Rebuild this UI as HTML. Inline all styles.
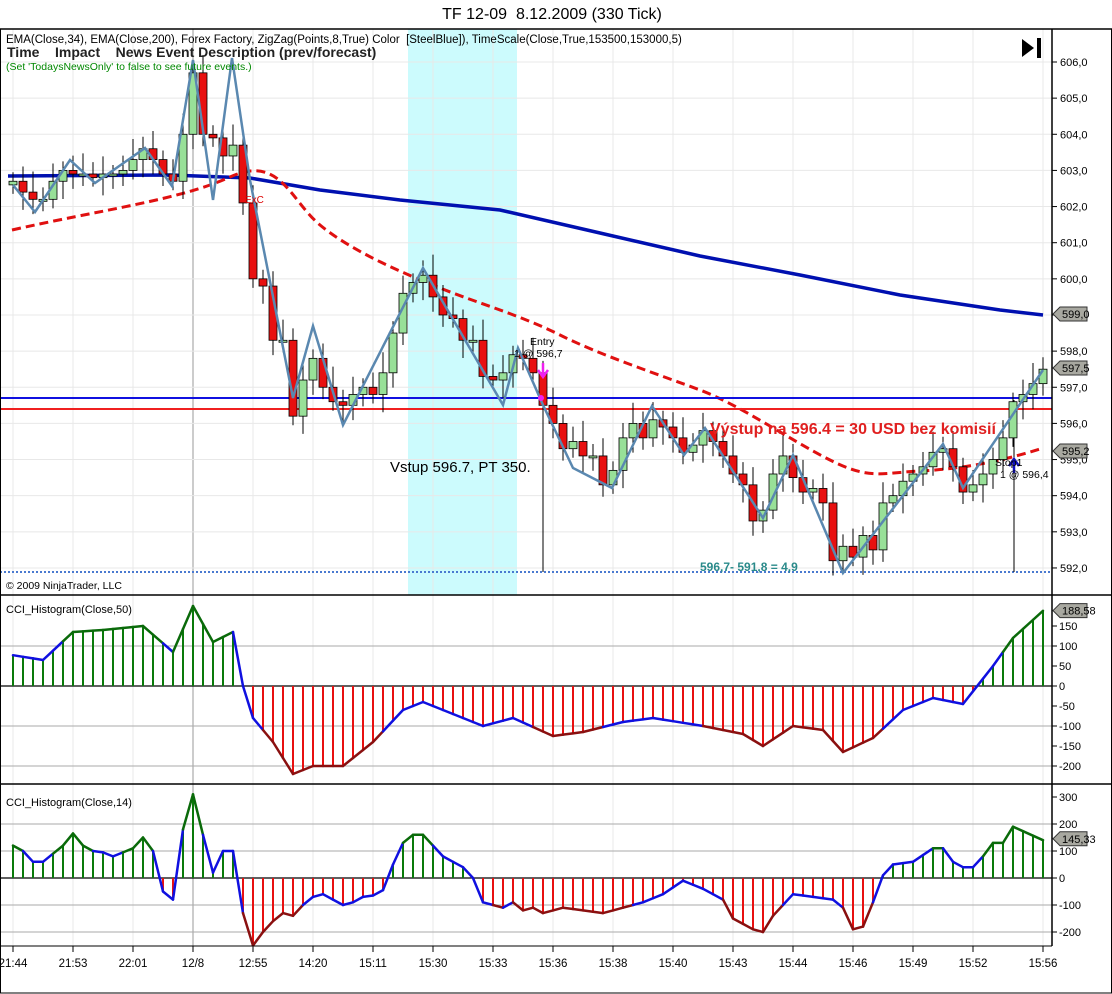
<!DOCTYPE html>
<html><head><meta charset="utf-8"><style>
body{margin:0;background:#fff;width:1112px;height:994px;overflow:hidden;font-family:"Liberation Sans",sans-serif}
svg{display:block}
text{white-space:pre}
</style></head><body>
<svg id="s" width="1112" height="994" xmlns="http://www.w3.org/2000/svg" font-family="Liberation Sans, sans-serif"></svg>
<script>
const S=document.getElementById('s');let h='';
const Y=p=>62+(606-p)*36.14;
const closes=[602.7,602.4,602.2,602.2,602.7,603.0,602.9,602.9,602.8,602.9,602.9,603.0,603.3,603.6,603.3,602.9,602.7,604.0,605.7,604.0,603.9,603.4,603.7,602.1,600.0,599.8,598.3,598.3,596.2,597.2,597.8,597.0,596.6,596.5,596.8,597.0,596.8,597.4,598.5,599.6,599.9,600.1,599.5,599.0,598.9,598.3,598.3,597.3,597.2,597.4,597.9,597.8,597.4,596.5,596.0,595.3,595.5,595.1,595.1,594.3,594.7,595.6,596.0,595.6,596.1,595.9,595.6,595.2,595.4,595.8,595.5,595.1,594.6,594.3,593.3,593.6,594.6,595.1,594.5,594.1,594.2,593.8,592.2,592.6,592.3,592.9,592.5,593.8,594.0,594.4,594.6,594.8,595.2,595.3,594.8,594.1,594.3,594.6,595.0,595.6,596.6,596.8,597.1,597.5];
const X=i=>13+i*10;
h+='<rect x="408" y="29" width="109" height="566" fill="#ccfbfd"/>';
const times=['21:44','21:53','22:01','12/8','12:55','14:20','15:11','15:30','15:33','15:36','15:38','15:40','15:43','15:44','15:46','15:49','15:52','15:56'];
for(let i=0;i<times.length;i++){const xx=i==17?1043:13+i*60;
 h+=`<line x1="${xx}" y1="29" x2="${xx}" y2="946" stroke="${times[i]=='12/8'?'#999':'#e8e8e8'}" stroke-width="1"/>`;
 h+=`<line x1="${xx}" y1="946" x2="${xx}" y2="952" stroke="#000"/>`;
 h+=`<text x="${xx}" y="967" font-size="11.5" text-anchor="middle">${times[i]}</text>`;}
for(let p=592;p<=606;p++){const y=Y(p);h+=`<line x1="0" y1="${y}" x2="1052" y2="${y}" stroke="#e8e8e8"/><line x1="1052" y1="${y}" x2="1057" y2="${y}" stroke="#000"/><text x="1060" y="${y+4}" font-size="11">${p},0</text>`;}
h+='<polyline fill="none" stroke="#0010b0" stroke-width="3.5" points="8,176 170,175 250,178 320,190 400,200 500,210 600,233 700,256 800,275 900,295 1000,310 1043,315"/>';
h+='<path fill="none" stroke="#e01010" stroke-width="3" stroke-dasharray="9,5" d="M12,230 C100,210 180,200 230,177 S290,200 320,225 S400,272 440,288 S520,315 560,335 S660,375 700,390 S790,440 830,460 S880,473 920,471 S1000,462 1043,448"/>';
h+='<line x1="0" y1="398" x2="1052" y2="398" stroke="#1010e0" stroke-width="2"/><line x1="0" y1="409" x2="1052" y2="409" stroke="#f02020" stroke-width="2"/>';
h+='<line x1="0" y1="572" x2="1052" y2="572" stroke="#4a7ad0" stroke-width="2" stroke-dasharray="2,2"/>';
h+='<line x1="543" y1="400" x2="543" y2="572" stroke="#000"/><line x1="1014" y1="400" x2="1014" y2="572" stroke="#000"/>';
let prev=602.6;
closes.forEach((c,i)=>{const o=prev;const x=X(i);const hi=Math.max(o,c)+0.25+((i*7)%5)*0.08,lo=Math.min(o,c)-0.25-((i*3)%4)*0.08;
 h+=`<line x1="${x}" y1="${Y(hi)}" x2="${x}" y2="${Y(lo)}" stroke="#000"/>`;
 const t=Math.min(Y(o),Y(c)),bh=Math.max(2,Math.abs(Y(o)-Y(c)));
 h+=`<rect x="${x-4}" y="${t}" width="8" height="${bh}" fill="${c<o?'#e81010':'#98e098'}" stroke="#000" stroke-width="0.8"/>`;prev=c;});
h+='<polyline fill="none" stroke="#5a88b0" stroke-width="2.5" points="13,185 35,212 70,160 95,183 145,148 172,186 193,60 213,200 232,58 250,180 293,398 313,326 343,425 423,268 503,405 518,348 543,405 573,468 612,488 652,406 684,455 705,428 763,518 793,455 843,573 943,444 963,488 1043,370"/>';
h+='<text x="245" y="203" font-size="10" fill="#d00">ExC</text>';
h+='<text x="530" y="345" font-size="10.5">Entry</text><text x="514" y="357" font-size="10.5">1 @ 596,7</text>';
h+='<path d="M543,363 v12 M538,370 l5,7 l5,-7" stroke="#f020f0" stroke-width="2.5" fill="none"/><circle cx="541" cy="398" r="3" fill="#f020f0"/>';
h+='<path d="M1014,473 v-12 M1009,466 l5,-7 l5,7" stroke="#1010c0" stroke-width="2.5" fill="none"/>';
h+='<text x="995" y="466" font-size="10.5">Stop1</text><text x="1000" y="478" font-size="10.5">1 @ 596,4</text>';
h+='<text x="390" y="472" font-size="15">Vstup 596.7, PT 350.</text>';
h+='<text x="710" y="434" font-size="16" font-weight="bold" fill="#e02020">Výstup na 596.4 = 30 USD bez komisií</text>';
h+='<text x="700" y="571" font-size="12" font-weight="bold" fill="#2a8a8a">596,7- 591,8 = 4,9</text>';
h+='<text x="6" y="589" font-size="10.5">© 2009 NinjaTrader, LLC</text>';
h+='<text x="6" y="43" font-size="11.5">EMA(Close,34), EMA(Close,200), Forex Factory, ZigZag(Points,8,True) Color  [SteelBlue]), TimeScale(Close,True,153500,153000,5)</text>';
h+='<text x="7" y="57" font-size="14" font-weight="bold" fill="#222">Time    Impact    News Event Description (prev/forecast)</text>';
h+='<text x="6" y="70" font-size="10.5" fill="#080">(Set \'TodaysNewsOnly\' to false to see future events.)</text>';
h+='<path d="M1022,39 l12,9 l-12,9z" fill="#000"/><rect x="1037" y="38" width="4" height="20" fill="#000"/>';
function tag(y,t){return `<path d="M1053,${y} l7,-7 h27 v14 h-27z" fill="#a8a8a0" stroke="#333"/><text x="1062" y="${y+4}" font-size="11">${t}</text>`;}
h+=tag(314,'599,0')+tag(368,'597,5')+tag(451,'595,2');
function interp(pts){const out=[];for(let i=0;i<104;i++){const x=X(i);let k=0;while(k<pts.length-2&&pts[k+1][0]<x)k++;const [x0,v0]=pts[k],[x1,v1]=pts[k+1];let t=(x-x0)/(x1-x0);t=Math.max(0,Math.min(1,t));out.push(v0+(v1-v0)*t);}return out;}
function panel(vals,z,sc,grid,labels,title,tv,tt,ty){
 grid.forEach(g=>{const y=z-g*sc;h+=`<line x1="0" y1="${y}" x2="1052" y2="${y}" stroke="${g==0?'#000':'#aaa'}" stroke-width="${g==0?1.2:1}"/>`});
 labels.forEach(g=>{const y=z-g*sc;h+=`<line x1="1052" y1="${y}" x2="1057" y2="${y}" stroke="#000"/><text x="1059" y="${y+4}" font-size="11">${g}</text>`});
 vals.forEach((v,i)=>{h+=`<line x1="${X(i)}" y1="${z}" x2="${X(i)}" y2="${z-v*sc}" stroke="${v>=0?'#0a7a0a':'#e81010'}" stroke-width="2"/>`});
 for(let i=0;i<103;i++){const a=(vals[i]+vals[i+1])/2;const c=a>100?'#0a6a0a':(a<-100?'#8a1010':'#1010e0');h+=`<line x1="${X(i)}" y1="${z-vals[i]*sc}" x2="${X(i+1)}" y2="${z-vals[i+1]*sc}" stroke="${c}" stroke-width="2.5" stroke-linecap="round"/>`;}
 h+=`<text x="6" y="${ty}" font-size="11">${title}</text>`;h+=tag(z-tv*sc,tt);}
const c50=interp([[13,77],[43,65],[73,135],[103,140],[143,150],[173,85],[193,200],[213,110],[233,135],[243,0],[253,-80],[273,-140],[293,-220],[313,-200],[343,-200],[373,-140],[403,-60],[423,-40],[463,-80],[483,-100],[513,-80],[553,-125],[583,-115],[623,-90],[653,-80],[703,-100],[743,-120],[763,-150],[793,-100],[823,-110],[843,-165],[873,-130],[903,-60],[933,-30],[963,-45],[993,50],[1013,120],[1043,188]]);
panel(c50,686,0.4,[100,0,-100,-200],[150,100,50,0,-50,-100,-150,-200],'CCI_Histogram(Close,50)',188.58,'188,58',613);
const c14=interp([[13,120],[23,100],[33,60],[43,60],[53,90],[63,120],[73,165],[83,120],[93,100],[103,95],[113,80],[123,95],[133,110],[143,150],[153,100],[163,-50],[173,-80],[183,180],[193,310],[203,160],[213,20],[223,100],[233,100],[243,-130],[253,-250],[263,-200],[273,-160],[283,-130],[293,-140],[303,-100],[313,-70],[323,-60],[333,-80],[343,-100],[353,-90],[363,-70],[373,-65],[383,-45],[393,50],[403,130],[413,160],[423,160],[433,120],[443,80],[453,60],[463,40],[473,0],[483,-90],[493,-100],[503,-110],[513,-90],[523,-120],[533,-110],[543,-130],[563,-110],[583,-120],[603,-130],[623,-110],[643,-90],[663,-60],[683,-10],[703,-40],[723,-80],[733,-150],[753,-190],[763,-200],[773,-140],[793,-60],[813,-70],[833,-80],[843,-110],[853,-190],[863,-180],[873,-90],[883,10],[893,50],[913,60],[933,110],[943,110],[953,60],[963,40],[973,40],[983,80],[993,130],[1003,130],[1013,190],[1043,140]]);
panel(c14,878,0.27,[200,100,0,-100,-200],[300,200,100,0,-100,-200],'CCI_Histogram(Close,14)',145.33,'145,33',806);
h+='<line x1="0" y1="29" x2="1112" y2="29" stroke="#000" stroke-width="1.5"/><line x1="0" y1="595" x2="1112" y2="595" stroke="#000" stroke-width="1.5"/><line x1="0" y1="784" x2="1112" y2="784" stroke="#000" stroke-width="1.5"/><line x1="0" y1="946" x2="1052" y2="946" stroke="#000"/>';
h+='<line x1="1052" y1="29" x2="1052" y2="946" stroke="#000" stroke-width="1.5"/><rect x="0.5" y="29" width="1111" height="964" fill="none" stroke="#000"/>';
h+='<text x="552" y="19" font-size="16" text-anchor="middle">TF 12-09  8.12.2009 (330 Tick)</text>';
S.innerHTML=h;
</script>
</body></html>
